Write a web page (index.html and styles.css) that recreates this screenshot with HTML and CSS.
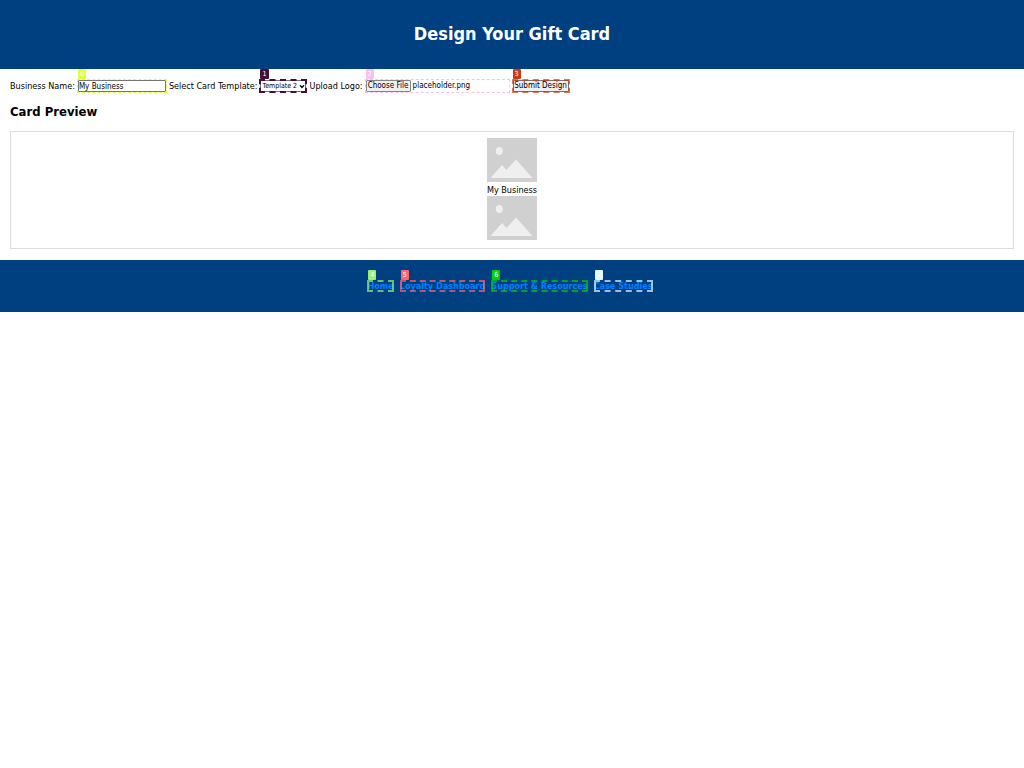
FILE: index.html
```html
<!DOCTYPE html>
<html lang="en">
<head>
<meta charset="utf-8">
<title>Design Your Gift Card</title>
<link rel="stylesheet" href="styles.css">
</head>
<body>
<svg class="defs" aria-hidden="true"><symbol id="placeholder" viewBox="0 0 50 44" preserveAspectRatio="none"><rect width="50" height="44" fill="#d0d0d0"/><ellipse cx="12.3" cy="13" rx="3.5" ry="4" fill="#efefef"/><path d="M3.5 40 L15 27 L19.5 32 L29 21.500 L45.500 40Z" fill="#efefef"/></symbol></svg>
<header class="header"><h1 class="title">Design Your Gift Card</h1></header>
<main class="main">
<form class="form">
<label for="name">Business Name:</label>
<span class="mark mark-0"><input class="control name" id="name" type="text" value="My Business"><span class="badge">0</span></span>
<label for="template">Select Card Template:</label>
<span class="mark mark-1"><select class="control template" id="template"><option>Template 1</option><option selected>Template 2</option><option>Template 3</option></select><svg class="chevron" viewBox="0 0 6 5" aria-hidden="true"><path d="M1 1.300 L3 3.500 L5 1.300" fill="none" stroke="#000" stroke-width="1.300"/></svg><span class="badge">1</span></span>
<label for="logo">Upload Logo:</label>
<span class="mark mark-2"><input class="control file" id="logo" type="file"><span class="badge">2</span></span>
<span class="mark mark-3"><button class="control submit" type="button">Submit Design</button><span class="badge">3</span></span>
</form>
<h2 class="subtitle">Card Preview</h2>
<section class="preview">
<svg class="picture" role="img" aria-label="Card template"><use href="#placeholder"/></svg>
<div class="business">My Business</div>
<svg class="picture" role="img" aria-label="Logo"><use href="#placeholder"/></svg>
</section>
</main>
<footer class="footer">
<nav class="links">
<a class="mark mark-4" href="#">Home<span class="badge">4</span></a>
<a class="mark mark-5" href="#">Loyalty Dashboard<span class="badge">5</span></a>
<a class="mark mark-6" href="#">Support &amp; Resources<span class="badge">6</span></a>
<a class="mark mark-7" href="#">Case Studies<span class="badge">7</span></a>
</nav>
</footer>
<script src="script.js"></script>
</body>
</html>
```
FILE: styles.css
```css
* { box-sizing: border-box; }
body { margin: 0; background: #fff; color: #000; font: 9px/12px "DejaVu Sans Condensed", "DejaVu Sans", sans-serif; }
.defs { position: absolute; width: 0; height: 0; }
.header { background: #004080; color: #fff; text-align: center; padding: 23px 10px 25px; }
.title { margin: 0; font-size: 18px; line-height: 21px; }
.main { padding: 10px 10px 11px; }
.form { display: flex; align-items: center; gap: 2px; height: 14px; }
.mark { position: relative; display: inline-flex; }
.mark::after { content: ""; position: absolute; inset: 0; border: 2px dashed var(--mark); pointer-events: none; opacity: 0.7; }
.form .mark { padding: 1px; }
.mark-0 { --mark: #e1ff32; }
.mark-1 { --mark: #44103a; }
.mark-2 { --mark: #f7c0ef; }
.mark-3 { --mark: #c93b15; }
.mark-4 { --mark: #a0ef72; }
.mark-5 { --mark: #ff6470; }
.mark-6 { --mark: #00d000; }
.mark-7 { --mark: #dffaff; }
.mark-0::after, .mark-2::after { border-width: 1px; opacity: 1; }
.mark-1::after { opacity: 1; }
.badge { position: absolute; left: 1px; bottom: 100%; padding: 0 2px; background: var(--mark); color: #fff; font-size: 7px; line-height: 10px; font-weight: 400; border-radius: 1px; }
.control { margin: 0; height: 12px; font: 8px/10px "DejaVu Sans Condensed", "DejaVu Sans", sans-serif; color: #000; border-radius: 1px; }
.name { width: 88px; padding: 0; border: 1px solid #767676; }
.template { appearance: none; width: 46px; padding: 0 0 0 1px; border: 1px solid #767676; background: #fff; font-size: 7px; }
.chevron { position: absolute; right: 2px; top: 5px; width: 6px; height: 5px; pointer-events: none; }
.file { width: 143px; padding: 0; }
.file::file-selector-button { width: 45px; height: 12px; margin: 0 2px 0 0; padding: 0 1px; border: 1px solid #858585; border-radius: 1px; background: #efefef; font: inherit; color: #000; }
.submit { width: 56px; padding: 0; border: 1px solid #767676; background: #efefef; }
.subtitle { margin: 10px 0; font-size: 13px; line-height: 18px; }
.preview { display: flex; flex-direction: column; align-items: center; border: 1px solid #ddd; padding: 6px 6px 8px; }
.picture { display: block; width: 50px; height: 44px; }
.business { padding-top: 2px; line-height: 12px; }
.footer { background: #004080; padding: 20px 10px; }
.links { display: flex; justify-content: center; gap: 6px; padding-right: 4px; font-weight: 700; }
.links a { color: #0080ff; text-decoration: none; }
```
FILE: script.js
```js
const transfer = new DataTransfer();
transfer.items.add(new File([""], "placeholder.png", { type: "image/png" }));
document.getElementById("logo").files = transfer.files;
```
